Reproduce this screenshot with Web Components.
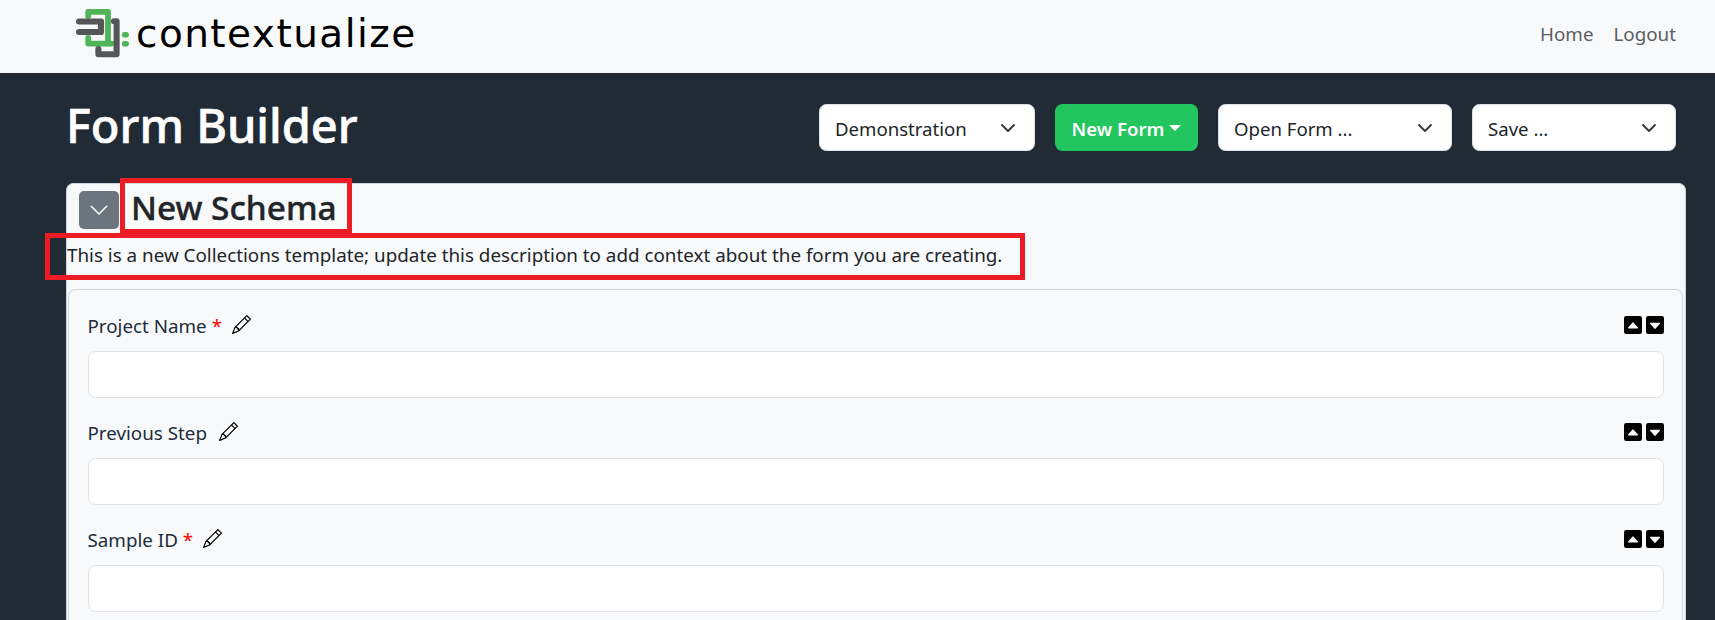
<!DOCTYPE html>
<html lang="en">
<head>
<meta charset="utf-8">
<title>Form Builder</title>
<style>
html,body{margin:0;padding:0;height:620px;overflow:hidden;background:#212b36;font-family:"Noto Sans","Open Sans",sans-serif;color:#212529}
</style>
</head>
<body>
<template id="t-nav">
<style>
:host{display:flex;justify-content:space-between;align-items:center;height:73px;box-sizing:border-box;padding:0 39px 6px 76px;background:#f8f9fa}
.brand{display:flex;align-items:center;gap:4px}
svg{display:block;width:56px;height:50px}
.name{font:39px/50px "DejaVu Sans",sans-serif;letter-spacing:1.45px;color:#000}
nav{display:flex;gap:20px;font-size:18.8px;color:#5d5e5f}
</style>
<div class="brand">
<svg viewBox="0 0 56 50" fill="none" stroke-linecap="round" stroke-linejoin="round">
<path d="M12.2 7V2.8H32V34.6M12.2 29V34.6H35.5" stroke="#4fb558" stroke-width="5.8"/>
<path d="M3 12.5H25V23H3" stroke="#555658" stroke-width="6.2"/>
<path d="M38 12.2H40.6V45.3H22.4V40" stroke="#555658" stroke-width="6.1"/>
<path d="M48.6 25.8H50.2M48.6 34.8H50.2" stroke="#4fb558" stroke-width="5.6"/>
</svg>
<span class="name">contextualize</span>
</div>
<nav><span>Home</span><span>Logout</span></nav>
</template>

<template id="t-select">
<style>
:host{display:flex;align-items:center;justify-content:space-between;box-sizing:border-box;height:47px;padding:2px 16px 0 15px;background:#fff;border:1px solid #dee2e6;border-radius:7.5px;font-size:18.6px;color:#212529}
svg{width:20px;height:20px;display:block;margin-top:-2px}
</style>
<slot></slot>
<svg viewBox="0 0 16 16" fill="none"><path d="m2 5 6 6 6-6" stroke="#343a40" stroke-width="1.9" stroke-linecap="round" stroke-linejoin="round" transform="translate(1.6 1.6) scale(.8)"/></svg>
</template>

<template id="t-button">
<style>
:host{display:flex;align-items:center;justify-content:center;gap:5px;box-sizing:border-box;height:47px;padding-top:2px;background:#22c55e;border-radius:7.5px;color:#fff;font-size:18.6px;font-weight:600}
i{display:block;width:0;height:0;border-left:6px solid transparent;border-right:6px solid transparent;border-top:6px solid #fff;margin-top:-2px}
</style>
<slot></slot><i></i>
</template>

<template id="t-header">
<style>
:host{display:flex;align-items:center;justify-content:space-between;height:110px;padding-right:10px}
h1{margin:-6px 0 0;font-size:47px;line-height:60px;font-weight:500;-webkit-text-stroke:.6px #fff;color:#fff}
.tools{display:flex;gap:20px;margin-bottom:1px}
</style>
<h1><slot name="title"></slot></h1>
<div class="tools"><slot></slot></div>
</template>

<template id="t-toggle">
<style>
:host{display:flex;align-items:center;justify-content:center;width:40px;height:38px;background:#6c757d;border-radius:5px}
svg{width:20px;height:20px;display:block}
</style>
<svg viewBox="0 0 16 16" fill="none"><path d="M1.8 5 8 11.2 14.2 5" stroke="#fff" stroke-width="1.2" stroke-linecap="round" stroke-linejoin="round"/></svg>
</template>

<template id="t-card">
<style>
:host{display:block;box-sizing:border-box;height:437px;background:#f8f9fa;border:1px solid #ced4da;border-bottom:0;border-radius:7.5px 7.5px 0 0;padding-top:7px}
.head{display:flex;align-items:center;gap:12px;height:38px;padding-left:12px}
h3{margin:-6px 0 0;font-size:33.4px;line-height:38px;font-weight:500;-webkit-text-stroke:.4px #212529;color:#212529}
p{margin:11px 0 19px;font-size:18.82px;line-height:30px;color:#212529}
</style>
<div class="head"><slot name="toggle"></slot><h3><slot name="title"></slot></h3></div>
<p><slot name="desc"></slot></p>
<slot></slot>
</template>

<template id="t-panel">
<style>
:host{display:block;box-sizing:border-box;margin:0 2px 0 1px;height:400px;background:#f8f9fa;border:1px solid #d4d7da;border-bottom:0;border-radius:7.5px 7.5px 0 0;padding:23px 18px 0 19px}
</style>
<slot></slot>
</template>

<template id="t-field">
<style>
:host{display:block;margin-bottom:22px}
.row{display:flex;align-items:center;height:30px;margin-bottom:8px}
label{font-size:18.8px;color:#212d3a;margin-left:-.5px;margin-top:-5px}
.req{color:#f00;margin-left:5px;margin-right:-2.5px;font-size:18.8px;margin-top:-5px}
.req:empty{display:none}
.pen{width:19px;height:19px;display:block;margin-left:12.5px;margin-top:-7px;color:#000}
.arrows{margin-left:auto;display:flex;gap:4px;margin-top:-7px}
.arrows svg{display:block;width:18px;height:18px}
input{display:block;box-sizing:border-box;width:100%;height:47px;background:#fff;border:1px solid #dee2e6;border-radius:7.5px;padding:0 16px;font:inherit;outline:0}
</style>
<div class="row">
<label><slot></slot></label><span class="req"></span>
<svg class="pen" viewBox="0 0 16 16" fill="currentColor"><path d="M12.146.146a.5.5 0 0 1 .708 0l3 3a.5.5 0 0 1 0 .708l-10 10a.5.5 0 0 1-.168.11l-5 2a.5.5 0 0 1-.65-.65l2-5a.5.5 0 0 1 .11-.168l10-10zM11.207 2.5 13.5 4.793 14.793 3.5 12.5 1.207 11.207 2.5zm1.586 3L10.5 3.207 4 9.707V10h.5a.5.5 0 0 1 .5.5v.5h.5a.5.5 0 0 1 .5.5v.5h.293l6.5-6.5zm-9.761 5.175-.106.106-1.528 3.821 3.821-1.528.106-.106A.5.5 0 0 1 5 12.5V12h-.5a.5.5 0 0 1-.5-.5V11h-.5a.5.5 0 0 1-.468-.325z"/></svg>
<span class="arrows">
<svg viewBox="0 0 16 16" fill="#000"><path d="M0 2a2 2 0 0 1 2-2h12a2 2 0 0 1 2 2v12a2 2 0 0 1-2 2H2a2 2 0 0 1-2-2V2zm4 9h8a.5.5 0 0 0 .374-.832l-4-4.5a.5.5 0 0 0-.748 0l-4 4.5A.5.5 0 0 0 4 11z"/></svg>
<svg viewBox="0 0 16 16" fill="#000"><path d="M0 2a2 2 0 0 1 2-2h12a2 2 0 0 1 2 2v12a2 2 0 0 1-2 2H2a2 2 0 0 1-2-2V2zm4 4a.5.5 0 0 0-.374.832l4 4.5a.5.5 0 0 0 .748 0l4-4.5A.5.5 0 0 0 12 6H4z"/></svg>
</span>
</div>
<input type="text">
</template>

<template id="t-mark">
<style>
:host{position:absolute;display:block;box-sizing:border-box;border:5px solid #ec1c24;pointer-events:none}
</style>
</template>

<template id="t-page">
<style>
:host{display:block;position:relative;height:620px;overflow:hidden}
main{padding:0 29px 0 66px;background:#212b36;height:547px;box-sizing:border-box}
</style>
<slot name="nav"></slot>
<main><slot></slot></main>
<slot name="marks"></slot>
</template>

<app-page>
<app-navbar slot="nav"></app-navbar>
<app-header>
<span slot="title">Form Builder</span>
<app-select style="width:216px">Demonstration</app-select>
<app-button style="width:143px">New Form</app-button>
<app-select style="width:234px">Open Form ...</app-select>
<app-select style="width:204px">Save ...</app-select>
</app-header>
<app-card>
<app-toggle slot="toggle"></app-toggle>
<span slot="title">New Schema</span>
<span slot="desc">This is a new Collections template; update this description to add context about the form you are creating.</span>
<app-panel>
<app-field required>Project Name</app-field>
<app-field>Previous Step</app-field>
<app-field required>Sample ID</app-field>
</app-panel>
</app-card>
<app-mark slot="marks" style="left:120px;top:178px;width:232px;height:56px"></app-mark>
<app-mark slot="marks" style="left:45px;top:233px;width:980px;height:47px"></app-mark>
</app-page>

<script>
function reg(tag,tpl,init){
  customElements.define(tag,class extends HTMLElement{
    constructor(){super();const r=this.attachShadow({mode:'open'});r.appendChild(document.getElementById(tpl).content.cloneNode(true));}
    connectedCallback(){if(init)init(this);}
  });
}
reg('app-navbar','t-nav');
reg('app-select','t-select');
reg('app-button','t-button');
reg('app-header','t-header');
reg('app-toggle','t-toggle');
reg('app-card','t-card');
reg('app-panel','t-panel');
reg('app-field','t-field',el=>{if(el.hasAttribute('required'))el.shadowRoot.querySelector('.req').textContent='*';});
reg('app-mark','t-mark');
reg('app-page','t-page');
</script>
</body>
</html>
